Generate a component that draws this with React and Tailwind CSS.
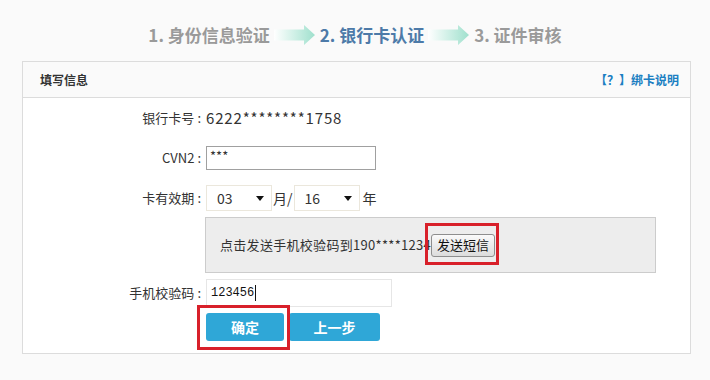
import React from "react";

const CJK = { fontFamily: '"Noto Sans CJK SC", "Noto Sans", sans-serif' };

function Arrow() {
  return (
    <svg width="42" height="20" viewBox="0 0 42 20" className="mx-[4px]">
      <defs>
        <linearGradient id="ag" x1="0" x2="1" y1="0" y2="0">
          <stop offset="0" stopColor="#ffffff" />
          <stop offset="1" stopColor="#9fe0cd" />
        </linearGradient>
      </defs>
      <path d="M0 4.5 H30 V0 L41 10 L30 20 V15.5 H0 Z" fill="url(#ag)" />
    </svg>
  );
}

function Select({ value }) {
  return (
    <div className="flex items-center justify-between w-[66px] h-[26px] border border-[#ebe7dc] bg-white pl-[10px] pr-[7px] text-[14px] text-[#333]">
      <span>{value}</span>
      <svg width="8" height="5" viewBox="0 0 8 5">
        <path d="M0 0 H8 L4 5 Z" fill="#111" />
      </svg>
    </div>
  );
}

function Label({ children, className = "" }) {
  return (
    <div className={"text-right whitespace-nowrap " + className}>
      {children}
      <span className="ml-[3px] mr-[4px]">:</span>
    </div>
  );
}

export default function App() {
  return (
    <div className="w-[710px] h-[380px] bg-[#fafafa] overflow-hidden" style={CJK}>
      <div className="pt-[20px] h-[50px] flex items-center justify-center">
        <div className="flex items-center font-bold text-[17px] leading-[30px]">
          <span className="text-[#9a9a9a]">1. 身份信息验证</span>
          <Arrow />
          <span className="text-[#4d7aa8]">2. 银行卡认证</span>
          <Arrow />
          <span className="text-[#9a9a9a]">3. 证件审核</span>
        </div>
      </div>

      <div className="mt-[11px] ml-[22px] w-[669px] h-[293px] border border-[#dcdcdc] bg-white">
        <div className="h-[36px] bg-[#fafafa] border-b border-[#dcdcdc] flex items-center justify-between pl-[17px] pr-[11px]">
          <span className="text-[12px] font-bold text-[#333]">填写信息</span>
          <span className="text-[12px] font-bold text-[#1b7fc2]">【？】绑卡说明</span>
        </div>

        <div className="grid grid-cols-[182px_1fr] items-center text-[13px] text-[#333] pt-[10px]">
          <Label className="h-[20px] leading-[20px]">银行卡号</Label>
          <div className="h-[20px] leading-[20px] text-[15px] tracking-[0.85px] pl-[1px]">6222********1758</div>

          <Label className="mt-[18px]">CVN2</Label>
          <div className="mt-[18px] pl-[1px]">
            <div className="w-[170px] h-[24px] border border-[#a0a0a0] px-[3px] leading-[18px] text-[13px]">***</div>
          </div>

          <Label className="mt-[15px]">卡有效期</Label>
          <div className="mt-[15px] pl-[1px] flex items-center">
            <Select value="03" />
            <span className="text-[14px] mx-[1px]">月/</span>
            <Select value="16" />
            <span className="text-[14px] ml-[3px]">年</span>
          </div>

          <div className="mt-[6px]"></div>
          <div className="mt-[6px]">
            <div className="w-[451px] h-[56px] bg-[#ededed] border border-[#cccccc] flex items-center pl-[14px] text-[13px]">
              <span className="whitespace-nowrap shrink-0 tracking-[0.3px]">点击发送手机校验码到190****1234</span>
              <div className="relative shrink-0">
                <div className="h-[23px] px-[5px] border border-[#8e8e8e] rounded-[3px] bg-gradient-to-b from-[#fafafa] to-[#dcdcdc] flex items-center text-[13px] text-[#111] whitespace-nowrap">发送短信</div>
                <div className="absolute left-[-6px] top-[-11px] w-[74px] h-[42px] border-[3px] border-[#d8202a]"></div>
              </div>
            </div>
          </div>

          <Label className="mt-[6px]">手机校验码</Label>
          <div className="mt-[6px] pl-[1px]">
            <div className="w-[186px] h-[28px] border border-[#e6e6e6] flex items-center pl-[4px] text-[12px] text-[#111]" style={{ fontFamily: '"Liberation Mono", monospace' }}>
              123456<span className="inline-block w-[1px] h-[16px] bg-[#111] ml-[1px]"></span>
            </div>
          </div>

          <div className="mt-[6px]"></div>
          <div className="mt-[6px] pl-[1px] flex gap-[5px]">
            <div className="relative">
              <div className="w-[78px] h-[28px] rounded-[3px] bg-[#2fa7d7] text-white font-bold text-[14px] flex items-center justify-center">确定</div>
              <div className="absolute left-[-9px] top-[-8px] w-[93px] h-[45px] border-[3px] border-[#d8202a]"></div>
            </div>
            <div className="w-[91px] h-[28px] rounded-[3px] bg-[#2fa7d7] text-white font-bold text-[14px] flex items-center justify-center">上一步</div>
          </div>
        </div>
      </div>
    </div>
  );
}
